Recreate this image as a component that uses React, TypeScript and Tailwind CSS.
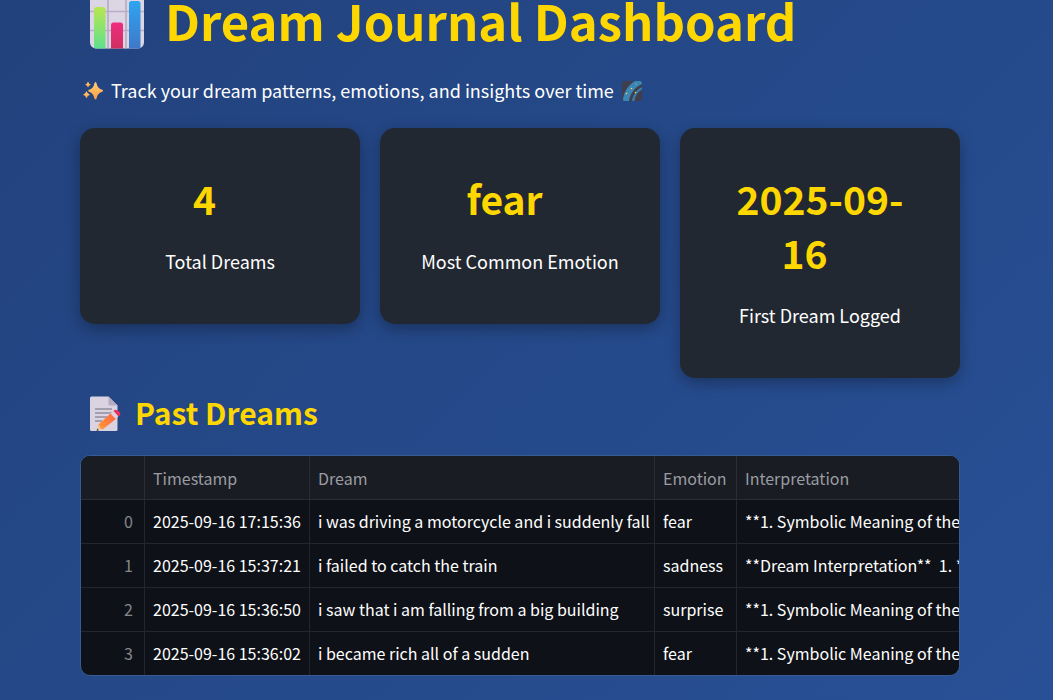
import type { ReactNode } from "react";

const stats = [
  { value: "4", label: "Total Dreams" },
  { value: "fear", label: "Most Common Emotion" },
  { value: "2025-09-16", label: "First Dream Logged" },
];

const symbolic = "**1. Symbolic Meaning of the Dream**";
const dreams = [
  { time: "2025-09-16 17:15:36", dream: "i was driving a motorcycle and i suddenly fall", emotion: "fear", text: symbolic },
  { time: "2025-09-16 15:37:21", dream: "i failed to catch the train", emotion: "sadness", text: "**Dream Interpretation**\u00a0 1. **Symbolic" },
  { time: "2025-09-16 15:36:50", dream: "i saw that i am falling from a big building", emotion: "surprise", text: symbolic },
  { time: "2025-09-16 15:36:02", dream: "i became rich all of a sudden", emotion: "fear", text: symbolic },
];

function ChartIcon() {
  return (
    <svg className="h-[55px] w-[55px] shrink-0" viewBox="0 0 55 55" aria-hidden="true">
      <defs>
        <linearGradient id="green" x1="0" y1="0" x2="0" y2="1">
          <stop offset="0" stopColor="#b8e650" />
          <stop offset="1" stopColor="#5fe08e" />
        </linearGradient>
        <linearGradient id="pink" x1="0" y1="0" x2="0" y2="1">
          <stop offset="0" stopColor="#f02c80" />
          <stop offset="1" stopColor="#cf2f60" />
        </linearGradient>
        <linearGradient id="blue" x1="0" y1="0" x2="0" y2="1">
          <stop offset="0" stopColor="#2fa4f0" />
          <stop offset="1" stopColor="#3f78c8" />
        </linearGradient>
        <clipPath id="board"><rect x="0" y="0.5" width="54" height="54" rx="6" /></clipPath>
      </defs>
      <g clipPath="url(#board)">
        <rect width="55" height="55" fill="#dcd5e4" />
        <path d="M0 17.500H54M0 36.500H54M18 0V55M36 0V55" stroke="#b9aec5" strokeWidth="1.700" />
        <path d="M4 55V15.500Q4 13 6.500 13H13Q15.500 13 15.500 15.500V55Z" fill="url(#green)" />
        <path d="M21 55V31Q21 28.500 23.500 28.500H30.500Q33 28.500 33 31V55Z" fill="url(#pink)" />
        <path d="M39 55V9.500Q39 7 41.500 7H48Q50.500 7 50.500 9.500V55Z" fill="url(#blue)" />
      </g>
    </svg>
  );
}

function SparklesIcon() {
  return (
    <svg className="h-5 w-5 shrink-0" viewBox="0 0 20 20" aria-hidden="true">
      <defs>
        <linearGradient id="spark" x1="0" y1="0" x2="0" y2="1">
          <stop offset="0" stopColor="#ffd079" />
          <stop offset="1" stopColor="#ff9d3c" />
        </linearGradient>
      </defs>
      <g fill="url(#spark)">
        <path d="M12.500 1Q13.300 1 13.700 2.800Q14.500 7.300 18.700 8.500Q20 9 20 9.800Q20 10.500 18.700 11Q14.500 12.300 13.700 17Q13.300 18.500 12.500 18.500Q11.700 18.500 11.300 17Q10.300 12.300 6.500 11Q5.200 10.500 5.200 9.800Q5.200 9 6.500 8.500Q10.500 7.300 11.300 2.800Q11.700 1 12.500 1Z" />
        <path d="M5 0.500Q5.700 3 8 3.500Q5.700 4.300 5 6.500Q4.300 4.300 2 3.500Q4.300 3 5 0.500Z" />
        <path d="M3.500 10Q4.300 13 7 13.700Q4.300 14.500 3.500 17.500Q2.700 14.500 0 13.700Q2.700 13 3.500 10Z" />
      </g>
    </svg>
  );
}

function GalaxyIcon() {
  return (
    <svg className="h-5 w-5 shrink-0" viewBox="0 0 20 20" aria-hidden="true">
      <defs>
        <clipPath id="tile"><rect width="20" height="20" rx="2.500" /></clipPath>
      </defs>
      <g clipPath="url(#tile)">
        <rect width="20" height="20" fill="#403d4c" />
        <path d="M1 20C1 12 6 4 13 0H20V3C12 7 8 13 7 20Z" fill="#3a86b4" />
        <path d="M10 20C11 14 14 9 20 6V8.500C15.500 11 13 15 12.500 20Z" fill="#397da8" />
        <g fill="#ffd34e">
          <circle cx="9.500" cy="7.500" r="0.800" />
          <circle cx="4.500" cy="12.500" r="0.800" />
          <circle cx="13.500" cy="11.500" r="0.800" />
          <circle cx="14" cy="3" r="0.500" />
        </g>
      </g>
    </svg>
  );
}

function MemoIcon() {
  return (
    <svg className="h-9 w-[31px] shrink-0" viewBox="0 0 31 36" aria-hidden="true">
      <defs>
        <linearGradient id="pencil" x1="0" y1="1" x2="1" y2="0">
          <stop offset="0" stopColor="#ff9a36" />
          <stop offset="1" stopColor="#ff6340" />
        </linearGradient>
      </defs>
      <path d="M1.500 0.500H18.500L27.500 9.500V33.500Q27.500 35 26 35H1.500Q0 35 0 33.500V2Q0 0.500 1.500 0.500Z" fill="#dad3e1" />
      <path d="M18.500 0.500L27.500 9.500H20Q18.500 9.500 18.500 8Z" fill="#b8acc3" />
      <path d="M5 13H22M5 17H22M5 21H17M5 25H12" stroke="#716a7b" strokeWidth="1.200" />
      <path d="M6.500 35L8.500 28.500L12.500 33Z" fill="#edc59b" />
      <path d="M6.500 35L7.300 32.500L9 34.200Z" fill="#514652" />
      <path d="M8.500 28.500L21 17L26.500 22.500L12.500 33.500Q10 32 8.500 28.500Z" fill="url(#pencil)" />
      <path d="M20.500 17.500L23.500 15L28.500 20L25.700 23Z" fill="#ded5e0" />
      <path d="M23.500 15Q26 12.500 29 15.500Q32 18.500 28.500 20.500Z" fill="#ec3159" />
    </svg>
  );
}

function HeadCell({ children }: { children?: ReactNode }) {
  return (
    <th scope="col" className="h-11 border-r border-b border-[#2b2d34] px-2 text-left font-normal text-[#9b9ca1] last:border-r-0">
      {children}
    </th>
  );
}

function Cell({ children }: { children: ReactNode }) {
  return (
    <td className="border-r border-b border-[#23262c] px-2 pb-[2px] text-white group-last:border-b-0 last:border-r-0">
      {children}
    </td>
  );
}

export default function App() {
  return (
    <div className="min-h-screen bg-linear-135 from-[#22427d] to-[#285096] pr-[93px] pb-6 pl-20 font-['Noto_Sans_CJK_SC',sans-serif] text-white">
      <main>
        <h1 className="flex h-[42px] items-center gap-5 pl-[10px] text-[49px] leading-none font-bold text-[#ffd700]">
          <ChartIcon />
          <span className="pb-1">Dream Journal Dashboard</span>
        </h1>
        <p className="mt-[34px] flex h-[30px] items-center gap-2 pl-[3px] text-[18px] leading-7">
          <SparklesIcon />
          <span className="pb-[2px]">Track your dream patterns, emotions, and insights over time</span>
          <GalaxyIcon />
        </p>

        <section className="mt-[22px] grid grid-cols-3 items-start gap-5">
          {stats.map((stat) => (
            <article key={stat.label} className="rounded-[15px] bg-[#222831] px-[38px] pt-[43px] pb-12 text-center shadow-[0_5px_15px_rgba(0,0,0,0.3)]">
              <h2 className="text-[39px] leading-[54px] font-semibold text-[#ffd700]">
                {stat.value}
                <span className="inline-block w-[31px]" aria-hidden="true" />
              </h2>
              <p className="mt-[21px] text-[18px] leading-[30px]">{stat.label}</p>
            </article>
          ))}
        </section>

        <h2 className="mt-[14px] flex h-11 items-center gap-[14px] pl-[10px] text-[30px] leading-none font-semibold text-[#ffd700]">
          <MemoIcon />
          <span className="pb-1">Past Dreams</span>
        </h2>

        <div className="mt-[19px] overflow-hidden rounded-[10px] border border-[#385b94] bg-[#0e1117]">
          <table className="w-full table-fixed border-separate border-spacing-0 text-[16px] leading-6 whitespace-nowrap">
            <colgroup>
              <col className="w-16" />
              <col className="w-[165px]" />
              <col className="w-[345px]" />
              <col className="w-[82px]" />
              <col />
            </colgroup>
            <thead className="bg-[#1a1c24]">
              <tr>
                <HeadCell />
                <HeadCell>Timestamp</HeadCell>
                <HeadCell>Dream</HeadCell>
                <HeadCell>Emotion</HeadCell>
                <HeadCell>Interpretation</HeadCell>
              </tr>
            </thead>
            <tbody>
              {dreams.map((row, index) => (
                <tr key={row.time} className="group h-11 last:h-[43px]">
                  <th scope="row" className="border-r border-b border-[#23262c] px-[11px] pb-[2px] text-right font-normal text-[#85878b] group-last:border-b-0">
                    {index}
                  </th>
                  <Cell>{row.time}</Cell>
                  <Cell>{row.dream}</Cell>
                  <Cell>{row.emotion}</Cell>
                  <Cell>{row.text}</Cell>
                </tr>
              ))}
            </tbody>
          </table>
        </div>
      </main>
    </div>
  );
}
